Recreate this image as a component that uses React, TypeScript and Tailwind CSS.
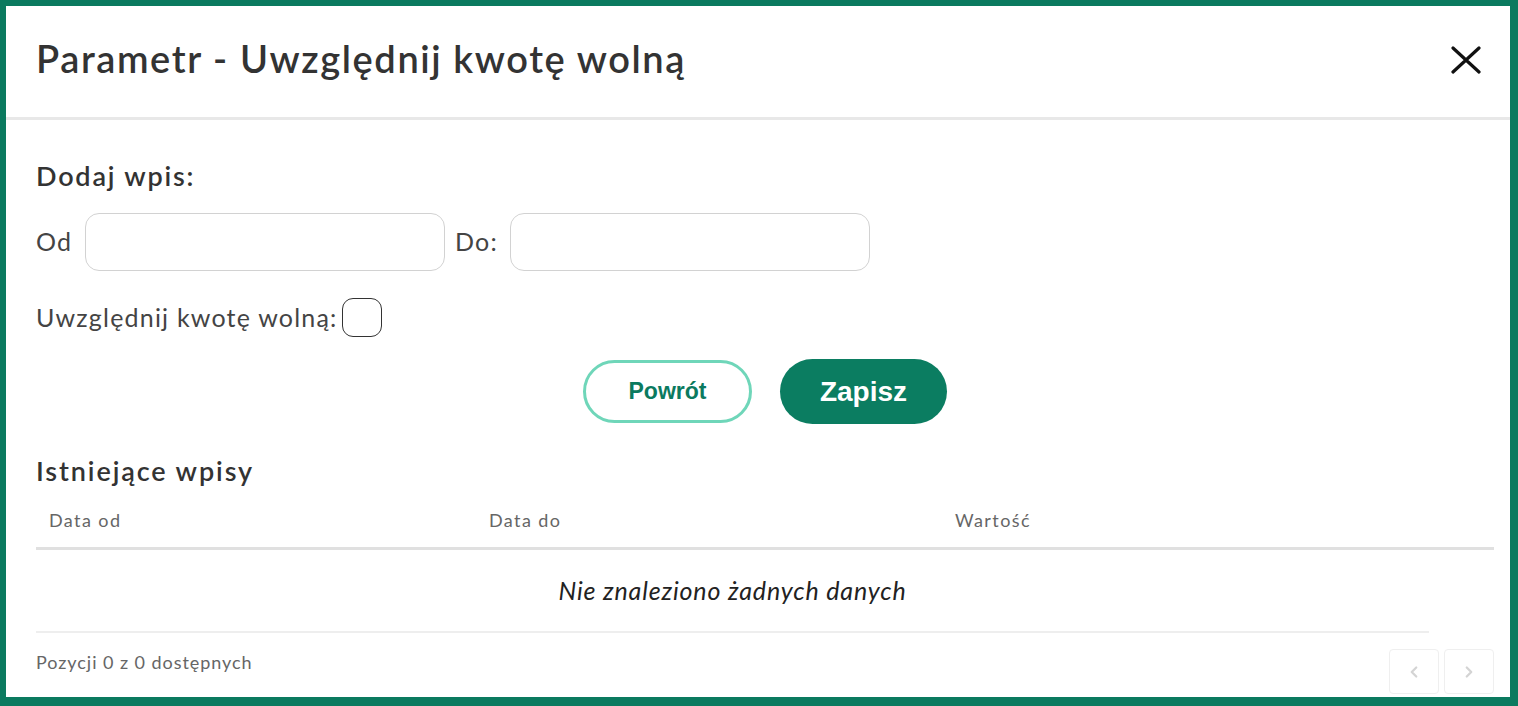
import { ChevronLeft, ChevronRight } from 'lucide-react'

const lato = { fontFamily: 'Lato, "Noto Sans", sans-serif' }
const arial = { fontFamily: '"Liberation Sans", Arial, sans-serif' }

export default function App() {
  return (
    <div
      className="h-[706px] w-[1518px] bg-white border-[#0b7a5f] border-t-[6px] border-l-[6px] border-r-[8px] border-b-[9px] flex flex-col text-[#333]"
      style={lato}
    >
      {/* Header */}
      <div className="h-[114px] shrink-0 flex items-start justify-between pl-[30px] pr-[29px] border-b-[3px] border-[#e8e8e8]">
        <h1 className="mt-[30px] text-[38px] leading-[44px] font-semibold tracking-[1.6px] text-[#333] whitespace-nowrap">
          Parametr - Uwzględnij kwotę wolną
        </h1>
        <svg className="mt-[40px]" width="30" height="28" viewBox="0 0 30 28" fill="none">
          <path d="M2 2 28 26M28 2 2 26" stroke="#111" strokeWidth="3.2" strokeLinecap="round" />
        </svg>
      </div>

      <div className="flex-1 flex flex-col pl-[30px] pr-[16px]">
        <h2 className="mt-[40px] text-[27px] leading-[32px] font-semibold tracking-[1.8px] whitespace-nowrap">
          Dodaj wpis:
        </h2>

        {/* Od / Do */}
        <div className="mt-[21px] flex items-center h-[58px] text-[25px] tracking-[1.2px] text-[#444]">
          <span className="w-[49px]">Od</span>
          <input className="w-[360px] h-[58px] rounded-[14px] border border-[#d2d2d2] outline-none" />
          <span className="w-[65px] pl-[10px]">Do:</span>
          <input className="w-[360px] h-[58px] rounded-[14px] border border-[#d2d2d2] outline-none" />
        </div>

        {/* Checkbox */}
        <div className="mt-[27px] flex items-center h-[39px] text-[25px] tracking-[1.2px] text-[#444]">
          <span className="w-[306px] whitespace-nowrap">Uwzględnij kwotę wolną:</span>
          <span className="w-[40px] h-[39px] rounded-[11px] border-[1.5px] border-[#333] inline-block" />
        </div>

        {/* Buttons */}
        <div className="mt-[22px] flex items-center justify-center gap-[28px] h-[65px]" style={arial}>
          <button className="w-[169px] h-[63px] rounded-full border-[3px] border-[#6fd6b9] text-[#0b7a5f] text-[23px] font-bold">
            Powrót
          </button>
          <button className="w-[167px] h-[65px] rounded-full bg-[#0b7d61] text-white text-[28px] font-bold">
            Zapisz
          </button>
        </div>

        <h2 className="mt-[31px] text-[27px] leading-[32px] font-semibold tracking-[1.9px] whitespace-nowrap">
          Istniejące wpisy
        </h2>

        {/* Table header */}
        <div className="h-[54px] pt-[6px] flex items-center border-b-[3px] border-[#e0e0e0] text-[18px] tracking-[1.4px] text-[#666] box-content">
          <span className="w-[453px] pl-[13px]">Data od</span>
          <span className="w-[466px]">Data do</span>
          <span>Wartość</span>
        </div>

        {/* Empty state */}
        <div className="h-[81px] flex items-center justify-center border-b-[2px] border-[#eeeeee] mr-[65px] box-content">
          <span className="text-[25px] italic tracking-[0.85px] text-[#222]">Nie znaleziono żadnych danych</span>
        </div>

        {/* Footer */}
        <div className="mt-[16px] flex items-start justify-between">
          <span className="mt-[1px] text-[18px] leading-[24px] tracking-[0.95px] text-[#666]">Pozycji 0 z 0 dostępnych</span>
          <div className="flex gap-[5px]">
            <button className="w-[50px] h-[45px] rounded-[4px] border border-[#efefef] flex items-center justify-center">
              <ChevronLeft className="w-[18px] h-[18px] text-[#d4d4d4]" strokeWidth={3} />
            </button>
            <button className="w-[50px] h-[45px] rounded-[4px] border border-[#efefef] flex items-center justify-center">
              <ChevronRight className="w-[18px] h-[18px] text-[#d4d4d4]" strokeWidth={3} />
            </button>
          </div>
        </div>
      </div>
    </div>
  )
}
